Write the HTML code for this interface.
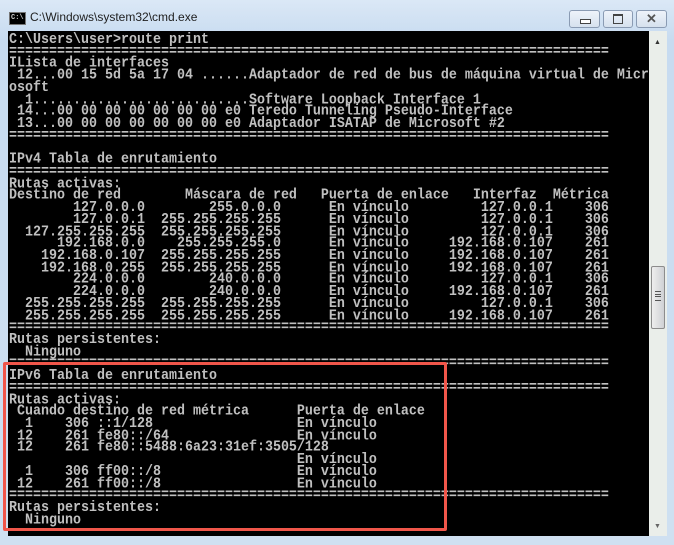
<!DOCTYPE html>
<html><head><meta charset="utf-8"><style>
body{margin:0;width:674px;height:545px;overflow:hidden;background:#cfe0f1;position:relative;font-family:"Liberation Sans",sans-serif}
.frame{position:absolute;left:0;top:0;width:674px;height:545px;background:linear-gradient(#dbe8f6,#c7dbf0 40px,#cfe0f1);}
.title{position:absolute;left:30px;top:10px;font-size:12px;color:#1e1e1e}
.icon{position:absolute;left:9px;top:12px;width:15px;height:11px;background:#000;border:1px solid #777;color:#ccc;font:bold 7px "Liberation Mono",monospace;line-height:10px;text-indent:1px}
.btn{position:absolute;top:10px;height:16px;border:1px solid #8a9bb3;border-radius:3px;background:linear-gradient(#eef3fa,#d6e1ee)}
.con{position:absolute;left:8px;top:31px;width:641px;height:505px;background:#000}
pre{margin:0;position:absolute;left:9px;top:35px;font:bold 13.33px/10.714px "Liberation Mono",monospace;color:#c0c0c0;white-space:pre;transform:scaleY(1.12);transform-origin:0 0}
.sb{position:absolute;left:649px;top:31px;width:18px;height:505px;background:#eaeeea}
.thumb{position:absolute;left:651px;top:266px;width:12px;height:61px;border:1px solid #8c8c8c;border-radius:2px;background:linear-gradient(90deg,#eee,#cfd1d4)}
.red{position:absolute;left:3px;top:362px;width:438px;height:163px;border:3px solid #f0564a;border-radius:2px}
</style></head><body>
<div class="frame"></div>
<div class="icon">C:\</div>
<div class="title">C:\Windows\system32\cmd.exe</div>
<div class="btn" style="left:569px;width:29px"><div style="position:absolute;left:10px;top:8px;width:9px;height:3px;border:1px solid #444;background:#fff"></div></div>
<div class="btn" style="left:603px;width:28px"><div style="position:absolute;left:9px;top:3px;width:8px;height:7px;border:1px solid #444;border-top-width:2px"></div></div>
<div class="btn" style="left:636px;width:29px;text-align:center;font-size:13px;line-height:16px;color:#555;font-weight:bold">✕</div>
<div class="con"></div>
<div class="sb"><div style="position:absolute;left:5px;top:8px;font-size:7px;color:#333">▲</div><div style="position:absolute;left:5px;top:492px;font-size:7px;color:#666">▼</div></div>
<div class="thumb"><div style="position:absolute;left:3px;top:24px;width:6px;height:8px;border-top:1px solid #555;border-bottom:1px solid #555"><div style="margin-top:2px;border-top:1px solid #555;border-bottom:1px solid #555;height:1px"></div></div></div>
<pre>C:\Users\user&gt;route print
===========================================================================
ILista de interfaces
 12...00 15 5d 5a 17 04 ......Adaptador de red de bus de máquina virtual de Micr
osoft
  1...........................Software Loopback Interface 1
 14...00 00 00 00 00 00 00 e0 Teredo Tunneling Pseudo-Interface
 13...00 00 00 00 00 00 00 e0 Adaptador ISATAP de Microsoft #2
===========================================================================

IPv4 Tabla de enrutamiento
===========================================================================
Rutas activas:
Destino de red        Máscara de red   Puerta de enlace   Interfaz  Métrica
        127.0.0.0        255.0.0.0      En vínculo         127.0.0.1    306
        127.0.0.1  255.255.255.255      En vínculo         127.0.0.1    306
  127.255.255.255  255.255.255.255      En vínculo         127.0.0.1    306
      192.168.0.0    255.255.255.0      En vínculo     192.168.0.107    261
    192.168.0.107  255.255.255.255      En vínculo     192.168.0.107    261
    192.168.0.255  255.255.255.255      En vínculo     192.168.0.107    261
        224.0.0.0        240.0.0.0      En vínculo         127.0.0.1    306
        224.0.0.0        240.0.0.0      En vínculo     192.168.0.107    261
  255.255.255.255  255.255.255.255      En vínculo         127.0.0.1    306
  255.255.255.255  255.255.255.255      En vínculo     192.168.0.107    261
===========================================================================
Rutas persistentes:
  Ninguno
===========================================================================
IPv6 Tabla de enrutamiento
===========================================================================
Rutas activas:
 Cuando destino de red métrica      Puerta de enlace
  1    306 ::1/128                  En vínculo
 12    261 fe80::/64                En vínculo
 12    261 fe80::5488:6a23:31ef:3505/128
                                    En vínculo
  1    306 ff00::/8                 En vínculo
 12    261 ff00::/8                 En vínculo
===========================================================================
Rutas persistentes:
  Ninguno</pre>
<div class="red"></div>
</body></html>
